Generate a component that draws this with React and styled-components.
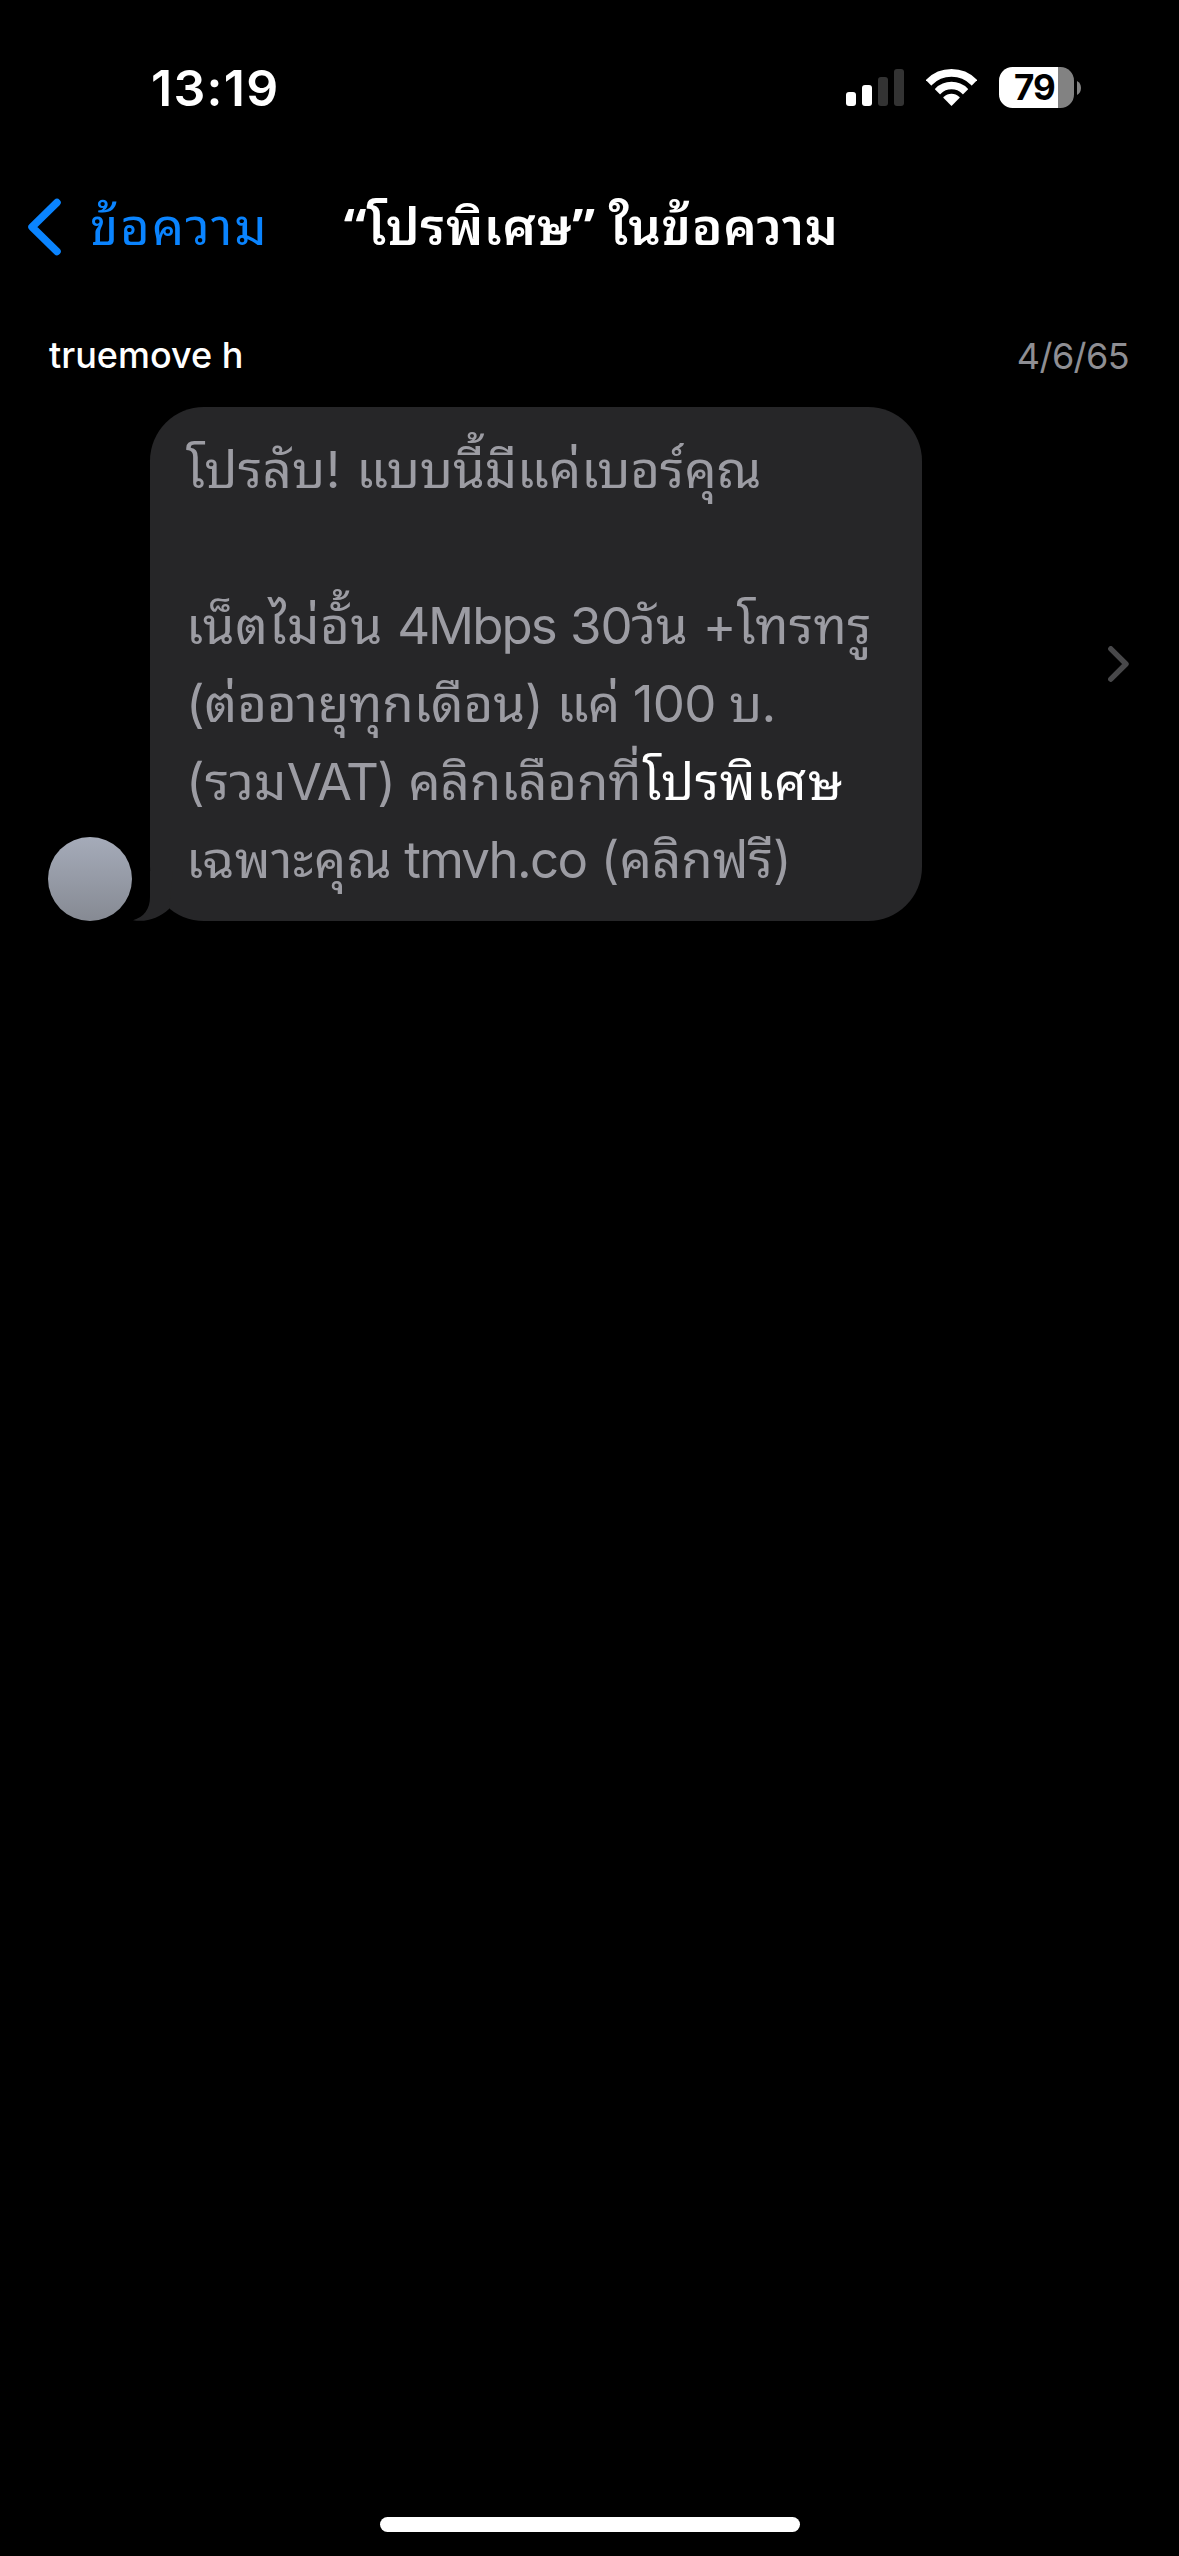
import React from "react";
import styled, { createGlobalStyle } from "styled-components";

const GlobalStyle = createGlobalStyle`
  * {
    box-sizing: border-box;
  }

  body {
    margin: 0;
    background: #000000;
    font-family: Inter, "Noto Sans Thai Looped", "Noto Looped Thai", "Noto Sans Thai", "Noto Sans", sans-serif;
    -webkit-font-smoothing: antialiased;
  }
`;

const Screen = styled.div`
  display: flex;
  flex-direction: column;
  width: 1179px;
  height: 2556px;
  background: #000000;
  color: #ffffff;
  overflow: hidden;
`;

const StatusBar = styled.header`
  display: flex;
  align-items: center;
  justify-content: space-between;
  height: 175px;
  padding: 0 98px 0 151px;
`;

const Time = styled.div`
  font-size: 50px;
  font-weight: 600;
  line-height: 60px;
  letter-spacing: 1.3px;
`;

const StatusIcons = styled.div`
  display: flex;
  align-items: center;
  gap: 22px;
`;

const Battery = styled.div`
  display: flex;
  align-items: center;
  gap: 3px;
`;

const BatteryBody = styled.div`
  width: 75px;
  height: 41px;
  padding-left: 15px;
  border-radius: 13.5px;
  background: linear-gradient(
    to right,
    #ffffff ${(props) => props.$level}%,
    #828282 ${(props) => props.$level}%
  );
  color: #000000;
  font-size: 35px;
  font-weight: 700;
  line-height: 41px;
  letter-spacing: -1px;
`;

const NavBar = styled.nav`
  display: grid;
  grid-template-columns: 1fr auto 1fr;
  align-items: center;
  height: 103px;
  padding: 0 26px;
`;

const BackButton = styled.a`
  display: flex;
  align-items: center;
  gap: 28px;
  color: #0a84ff;
  font-size: 51px;
  line-height: 78px;
  letter-spacing: 1.8px;
`;

const Title = styled.h1`
  margin: 0;
  padding-left: 3px;
  font-size: 51px;
  font-weight: 600;
  line-height: 78px;
  letter-spacing: 0.6px;
  white-space: nowrap;
`;

const Quote = styled.span`
  font-family: "Open Sans", sans-serif;
  font-weight: 700;
  line-height: 1;
`;

const Result = styled.section`
  display: flex;
  flex-direction: column;
  padding: 52px 50px 0 48px;
`;

const ResultHeader = styled.div`
  display: flex;
  justify-content: space-between;
  height: 77px;
  line-height: 50px;
  font-size: 36px;
`;

const Sender = styled.div`
  padding-left: 1px;
  font-weight: 500;
`;

const SentDate = styled.div`
  padding-top: 1px;
  color: #8e8e93;
  letter-spacing: -0.6px;
`;

const MessageRow = styled.div`
  display: flex;
  align-items: center;
  justify-content: space-between;
`;

const Message = styled.div`
  display: flex;
  align-items: flex-end;
  gap: 18px;
`;

const Avatar = styled.div`
  width: 84px;
  height: 84px;
  border-radius: 50%;
  background: linear-gradient(#a5abb9, #868a93);
`;

const Bubble = styled.div`
  position: relative;
  width: 772px;
  height: 514px;
  padding: 24px 36px 22px;
  border-radius: 54px;
  background: #262628;
  color: #9c9ca3;
`;

const Tail = styled.svg`
  position: absolute;
  left: -17px;
  bottom: 0;
`;

const Line = styled.div`
  height: 78px;
  font-size: 51px;
  line-height: 78px;
  white-space: pre;
`;

const Word = styled.span`
  margin-right: ${(props) => props.$gap || 0}px;
  letter-spacing: ${(props) => props.$tracking || 0}px;
  color: ${(props) => (props.$match ? "#ffffff" : "inherit")};
`;

const HomeIndicator = styled.div`
  width: 420px;
  height: 15px;
  margin: auto auto 24px;
  border-radius: 8px;
  background: #ffffff;
`;

const SignalIcon = () => (
  <svg width="58" height="37" viewBox="0 0 58 37" fill="#ffffff">
    <rect x="0" y="23" width="10" height="14" rx="3" />
    <rect x="16" y="16" width="10" height="21" rx="3" />
    <rect x="32" y="8" width="10" height="29" rx="3" opacity="0.2" />
    <rect x="48" y="0" width="10" height="37" rx="3" opacity="0.2" />
  </svg>
);

const WifiIcon = () => (
  <svg width="51" height="37" viewBox="0 0 51 37" fill="none" stroke="#ffffff">
    <clipPath id="wedge">
      <path d="M25.5 37 -1 10.2V-2H52V10.2Z" />
    </clipPath>
    <g clipPath="url(#wedge)">
      <circle cx="25.5" cy="35.5" r="31.6" strokeWidth="7.8" />
      <circle cx="25.5" cy="35.5" r="19" strokeWidth="7.6" />
      <circle cx="25.5" cy="35.5" r="10.8" fill="#ffffff" stroke="none" />
    </g>
  </svg>
);

const BackIcon = () => (
  <svg width="36" height="60" viewBox="0 0 36 60" fill="none">
    <path
      d="M31 5.5 6 30 31 54.5"
      stroke="#0a84ff"
      strokeWidth="7.5"
      strokeLinecap="round"
      strokeLinejoin="round"
    />
  </svg>
);

const DisclosureIcon = () => (
  <svg width="21" height="36" viewBox="0 0 21 36" fill="none">
    <path
      d="M2.8 2.8 18 18 2.8 33.2"
      stroke="#48484a"
      strokeWidth="5.4"
      strokeLinecap="round"
      strokeLinejoin="round"
    />
  </svg>
);

const lines = [
  [
    { text: "โปรลับ!", tracking: 0.5, gap: 1 },
    { text: " แบบนี้มีแค่เบอร์คุณ" },
  ],
  [],
  [
    { text: "เน็ตไม่อั้น", tracking: 0.6, gap: 2 },
    { text: " 4Mbps", tracking: -2, gap: 1 },
    { text: " 30", tracking: -1 },
    { text: "วัน" },
    { text: " +โทรทรู", tracking: 0.4 },
  ],
  [
    { text: "(ต่ออายุทุกเดือน)", gap: -0.5 },
    { text: " แค่", tracking: -0.8 },
    { text: " 100", tracking: -0.8 },
    { text: " บ.", tracking: -0.6 },
  ],
  [
    { text: "(รวม", tracking: 0.3 },
    { text: "VAT)", tracking: -1.7 },
    { text: " คลิกเลือกที่", tracking: -0.1, gap: 1 },
    { text: "โปรพิเศษ", tracking: 0.7, match: true },
  ],
  [
    { text: "เฉพาะคุณ", tracking: 0.4, gap: -0.5 },
    { text: " tmvh.co", tracking: -1.7 },
    { text: " (คลิกฟรี)", tracking: 0.1 },
  ],
];

const App = () => (
  <>
    <GlobalStyle />
    <Screen>
      <StatusBar>
        <Time>13:19</Time>
        <StatusIcons>
          <SignalIcon />
          <WifiIcon />
          <Battery>
            <BatteryBody $level={79}>79</BatteryBody>
            <svg width="4" height="14" viewBox="0 0 4 14" fill="#828282">
              <path d="M0 0C2.6 1.2 4 3.8 4 7S2.6 12.8 0 14Z" />
            </svg>
          </Battery>
        </StatusIcons>
      </StatusBar>
      <NavBar>
        <BackButton>
          <BackIcon />
          ข้อความ
        </BackButton>
        <Title>
          <Quote>“</Quote>โปรพิเศษ<Quote>”</Quote> ในข้อความ
        </Title>
      </NavBar>
      <Result>
        <ResultHeader>
          <Sender>truemove h</Sender>
          <SentDate>4/6/65</SentDate>
        </ResultHeader>
        <MessageRow>
          <Message>
            <Avatar />
            <Bubble>
              {lines.map((words, i) => (
                <Line key={i}>
                  {words.map((word) => (
                    <Word
                      key={word.text}
                      $tracking={word.tracking}
                      $gap={word.gap}
                      $match={word.match}
                    >
                      {word.text}
                    </Word>
                  ))}
                </Line>
              ))}
              <Tail width="40" height="50" viewBox="0 0 40 50" fill="#262628">
                <path d="M17 0V26C17 38 11 46 0 49.3C14 51.5 26 47 36 38L40 0Z" />
              </Tail>
            </Bubble>
          </Message>
          <DisclosureIcon />
        </MessageRow>
      </Result>
      <HomeIndicator />
    </Screen>
  </>
);

export default App;
